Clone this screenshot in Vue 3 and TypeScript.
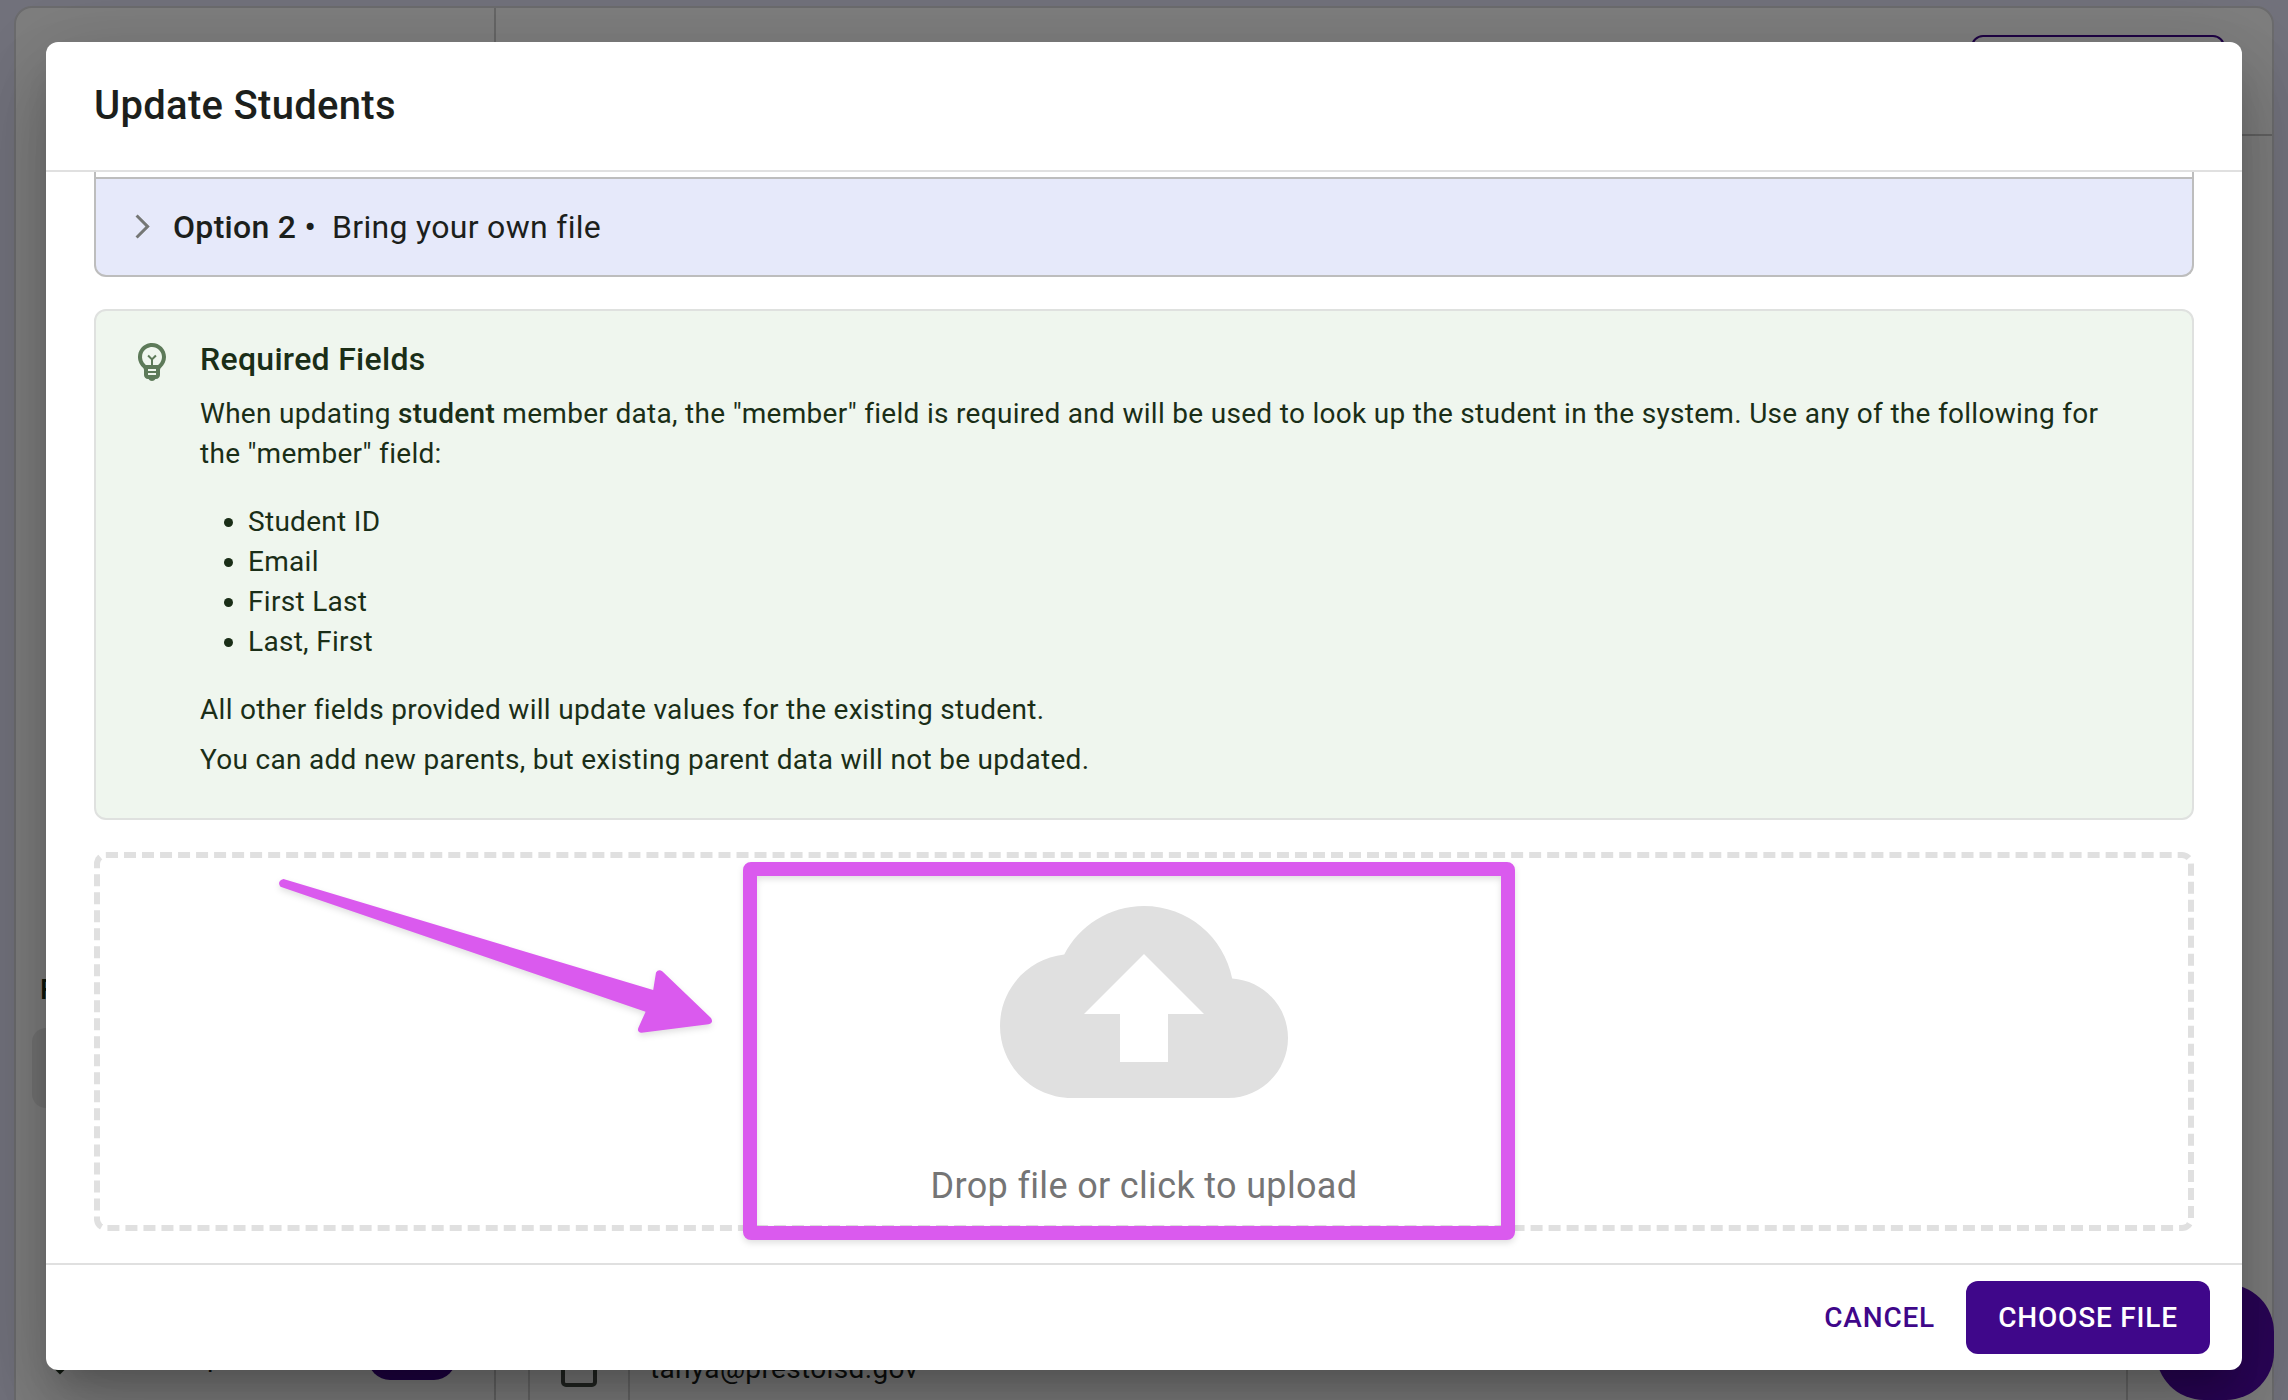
<script setup lang="ts">
const lookups: string[] = ['Student ID', 'Email', 'First Last', 'Last, First']
</script>

<template>
  <div class="screen">
    <div class="page">
      <aside class="sidebar">
        <span class="side-title">F</span>
        <div class="side-item"></div>
        <div class="side-row">
          <span class="chev"></span><span class="side-label">p</span><span class="chip"></span>
        </div>
      </aside>
      <main class="main">
        <div class="topbar"><div class="outline-btn"></div></div>
        <div class="table-row">
          <div class="check-cell"><span class="checkbox"></span></div>
          <div class="mail-cell">tanya@prestoisd.gov</div>
        </div>
      </main>
    </div>
    <div class="fab"></div>
    <div class="backdrop"></div>

    <section class="dialog">
      <header class="dialog-head"><h2>Update Students</h2></header>
      <div class="dialog-body">
        <div class="accordion">
          <svg class="arrow" viewBox="0 0 24 24"><path d="M6.23 20.23 8 22l10-10L8 2 6.23 3.77 14.46 12z" /></svg>
          <b>Option 2 •</b><span class="opt-text">Bring your own file</span>
        </div>
        <div class="info">
          <svg class="bulb" viewBox="0 0 24 24">
            <path d="M12 3c-.46 0-.93.04-1.4.14-2.76.53-4.96 2.76-5.48 5.52-.48 2.61.48 5.01 2.22 6.56.43.38.66.91.66 1.47V19c0 1.1.9 2 2 2h.28c.35.6.98 1 1.72 1s1.38-.4 1.72-1H14c1.1 0 2-.9 2-2v-2.31c0-.55.22-1.09.64-1.46C18.09 13.95 19 12.08 19 10c0-3.87-3.13-7-7-7zm2 14h-4v-1h4v1zm-4 2v-1h4v1h-4zm5.31-5.26c-.09.08-.16.18-.24.26H8.92c-.08-.09-.15-.19-.24-.27-1.32-1.18-1.91-2.94-1.59-4.7.36-1.94 1.96-3.55 3.89-3.93.34-.07.68-.1 1.02-.1 2.76 0 5 2.24 5 5 0 1.43-.61 2.79-1.69 3.74z" />
            <path d="M11.5 11h1v3h-1z" />
            <path d="M9.67 9.59l.71-.71L12 10.5l1.62-1.62.71.71L12 11.92z" />
          </svg>
          <div class="info-text">
            <h3>Required Fields</h3>
            <p class="lead">When updating <b>student</b> member data, the "member" field is required and will be used to look up the student in the system. Use any of the following for the "member" field:</p>
            <ul><li v-for="l in lookups" :key="l">{{ l }}</li></ul>
            <p>All other fields provided will update values for the existing student.</p>
            <p class="last">You can add new parents, but existing parent data will not be updated.</p>
          </div>
        </div>
        <div class="drop">
          <svg class="cloud" viewBox="0 0 24 24"><path d="M14 13v4h-4v-4H7l5-5 5 5zm5.35-2.96C18.67 6.59 15.64 4 12 4 9.11 4 6.6 5.64 5.35 8.04 2.34 8.36 0 10.91 0 14c0 3.31 2.69 6 6 6h13c2.76 0 5-2.24 5-5 0-2.64-2.05-4.78-4.65-4.96z" /></svg>
          <span>Drop file or click to upload</span>
        </div>
      </div>
      <footer class="dialog-foot">
        <button class="cancel">CANCEL</button>
        <button class="choose">CHOOSE FILE</button>
      </footer>
    </section>

    <div class="highlight"></div>
    <svg class="pointer" viewBox="0 0 460 180">
      <path d="M21.500 9 391.200 120 394 102.500Q396.500 98.500 400.500 101.500L449 148Q452 153 446.500 154.300L379.500 162.800Q374.500 162 376.500 157.500L383.600 141.700 18.500 16.800Q14.500 11.500 21.500 9Z" />
    </svg>
  </div>
</template>

<style>
body { margin: 0; overflow: hidden; }
</style>

<style scoped>
* { box-sizing: border-box; }
.screen { position: relative; width: 2288px; height: 1400px; overflow: hidden; background: #e4e4f8; font-family: Roboto, sans-serif; color: #1c1f1c; }
.page { display: flex; margin: 6px 14px 0; height: 1420px; border: 2px solid #d8d8dc; border-radius: 18px; background: #fff; overflow: hidden; }
.sidebar { width: 480px; border-right: 2px solid #cfcfcf; position: relative; flex: none; }
.side-title { position: absolute; left: 24px; top: 966px; font-size: 28px; font-weight: 500; line-height: 32px; color: #1a2e17; }
.side-item { position: absolute; left: 16px; top: 1020px; width: 300px; height: 80px; border-radius: 14px; background: #ebebeb; }
.side-row { position: absolute; left: 16px; top: 1340px; width: 440px; height: 40px; }
.chev { position: absolute; left: 22px; top: 12px; width: 12px; height: 12px; transform: rotate(45deg); background: #20301e; }
.side-label { position: absolute; left: 175px; top: -7px; font-size: 28px; line-height: 32px; }
.chip { position: absolute; left: 336px; top: -18px; width: 88px; height: 50px; border-radius: 22px; background: #3f078a; }
.main { flex: 1; display: flex; flex-direction: column; justify-content: space-between; }
.topbar { height: 128px; border-bottom: 2px solid #c6c6c6; position: relative; }
.outline-btn { position: absolute; left: 1475px; top: 27px; width: 254px; height: 70px; border: 2px solid #3f078a; border-radius: 12px; }
.table-row { display: flex; height: 94px; margin-left: 32px; width: 1600px; border-left: 2px solid #d4d4d4; border-right: 2px solid #d4d4d4; }
.check-cell { width: 100px; border-right: 2px solid #d4d4d4; padding: 21px 0 0 31px; }
.checkbox { display: block; width: 36px; height: 36px; border: 4px solid #454c45; border-radius: 5px; }
.mail-cell { padding: 19px 0 0 20px; font-size: 28px; line-height: 40px; letter-spacing: .35px; }
.fab { position: absolute; left: 2156px; top: 1284px; width: 118px; height: 116px; border-radius: 48px; background: #540ab0; }
.backdrop { position: absolute; inset: 0; background: rgba(0, 0, 0, .5); }
.dialog { position: absolute; left: 46px; top: 42px; width: 2196px; height: 1328px; border-radius: 12px; background: #fff; display: flex; flex-direction: column; overflow: hidden; box-shadow: 0 22px 30px -14px rgba(0,0,0,.2), 0 48px 76px 6px rgba(0,0,0,.14), 0 18px 92px 16px rgba(0,0,0,.12); }
.dialog-head { height: 130px; flex: none; border-bottom: 2px solid #e0e0e0; padding: 32px 48px; }
h2 { margin: 0; font-size: 40px; line-height: 64px; font-weight: 500; letter-spacing: .3px; }
.dialog-body { flex: 1; padding: 0 48px; min-height: 0; }
.accordion { height: 105px; border: 2px solid #bdbdbd; border-top: 0; border-radius: 0 0 12px 12px; background: linear-gradient(#fff 0 5px, #bdbdbd 5px 7px, #e6e9fa 7px); display: flex; align-items: center; padding: 6px 0 0 32px; font-size: 32px; letter-spacing: .3px; line-height: 48px; }
.arrow { width: 29px; height: 29px; fill: #757775; margin-right: 16px; }
b { font-weight: 500; }
.opt-text { margin-left: 16px; }
.info { margin-top: 32px; height: 511px; border: 2px solid #dfe1df; border-radius: 12px; background: #eff6ee; display: flex; padding: 28px 80px 28px 32px; color: #1a2e17; }
.bulb { width: 48px; height: 48px; margin: -2px 24px 0 0; fill: #5d7a59; flex: none; }
.info-text { font-size: 28px; line-height: 40px; letter-spacing: .3px; }
h3 { margin: -4px 0 11px; font-size: 32px; line-height: 48px; font-weight: 500; }
p { margin: 0; }
ul { margin: 28px 0; padding-left: 48px; }
.last { margin-top: 10px; }
.drop { margin-top: 32px; height: 379px; border: 6px dashed #e0e0e0; border-radius: 12px; display: flex; flex-direction: column; align-items: center; font-size: 36px; line-height: 54px; color: #757575; letter-spacing: .34px; }
.cloud { width: 288px; height: 288px; fill: #e0e0e0; margin-bottom: 13px; flex: none; }
.dialog-foot { height: 107px; flex: none; border-top: 2px solid #e0e0e0; display: flex; justify-content: flex-end; align-items: center; gap: 16px; padding-right: 32px; }
button { border: 0; background: none; font: 500 28px/49px Roboto, sans-serif; letter-spacing: .8px; height: 73px; padding: 0 16px; color: #3f078a; border-radius: 12px; }
.cancel { padding-right: 15px; }
.choose { background: #3f078a; color: #fff; width: 244px; padding: 0; }
.highlight { position: absolute; left: 743px; top: 862px; width: 772px; height: 378px; border: 14px solid #da5aee; border-radius: 8px; filter: drop-shadow(0 3px 3px rgba(0,0,0,.12)); }
.pointer { position: absolute; left: 262px; top: 870px; width: 460px; height: 180px; fill: #da5aee; filter: drop-shadow(0 3px 3px rgba(0,0,0,.12)); }
</style>
